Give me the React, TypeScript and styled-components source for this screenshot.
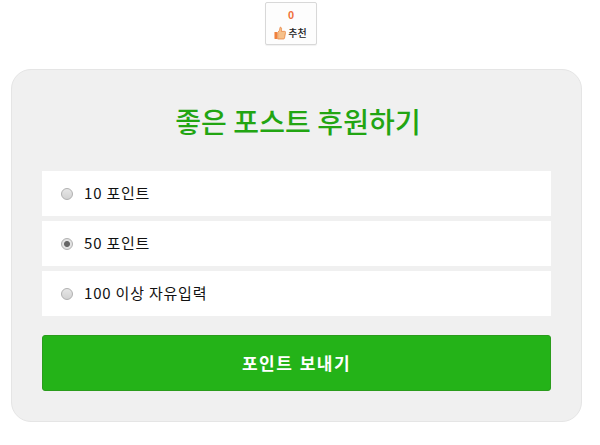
import React, { useState } from "react";
import styled, { createGlobalStyle } from "styled-components";

const GlobalStyle = createGlobalStyle`
    html, body {
        margin: 0;
        padding: 0;
        background: #fff;
        font-family: "Open Sans", "Noto Sans CJK KR", sans-serif;
    }
`;

const Page = styled.div`
    width: 600px;
    height: 445px;
    overflow: hidden;
    display: flex;
    flex-direction: column;
    align-items: flex-start;
    padding: 2px 0 0 11px;
    box-sizing: border-box;
`;

const LikeButton = styled.div`
    align-self: flex-start;
    margin-left: 254px;
    width: 52px;
    height: 43px;
    box-sizing: border-box;
    border: 1px solid #d8d8d8;
    border-radius: 2px;
    background: #fdfdfd;
    box-shadow: 0 1px 1px rgba(0, 0, 0, 0.06);
    display: flex;
    flex-direction: column;
    align-items: center;
    padding-top: 5px;
`;

const LikeCount = styled.div`
    font-family: "Liberation Sans", sans-serif;
    font-size: 11px;
    line-height: 14px;
    font-weight: 700;
    color: #f0703a;
`;

const LikeLabel = styled.div`
    display: flex;
    align-items: center;
    gap: 2px;
    margin: 3px 1px 0 0;
    font-family: "Noto Sans CJK KR", sans-serif;
    font-size: 10px;
    line-height: 16px;
    font-weight: 500;
    color: #222;
`;

const Card = styled.form`
    margin-top: 24px;
    width: 571px;
    height: 353px;
    box-sizing: border-box;
    padding: 0 30px;
    background: #f0f0f0;
    border: 1px solid #e5e5e5;
    border-radius: 20px;
`;

const Title = styled.h2`
    margin: 0;
    padding: 31px 0 0 3px;
    height: 101px;
    box-sizing: border-box;
    text-align: center;
    font-family: "Noto Sans CJK KR", sans-serif;
    font-size: 28px;
    line-height: 40px;
    font-weight: 500;
    letter-spacing: 0.1px;
    color: #22a512;
`;

const Options = styled.div`
    display: flex;
    flex-direction: column;
    gap: 5px;
`;

const Option = styled.label`
    height: 45px;
    padding: 0 0 2px 19px;
    box-sizing: border-box;
    display: flex;
    align-items: center;
    gap: 11px;
    background: #fff;
    font-family: "Noto Sans CJK KR", sans-serif;
    font-size: 15px;
    font-weight: 400;
    color: #111;
    letter-spacing: 0.8px;
`;

const Radio = styled.span<{ $checked: boolean }>`
    width: 12px;
    height: 12px;
    margin-top: 2px;
    box-sizing: border-box;
    border-radius: 50%;
    border: 1px solid #b0b0b0;
    background: ${props => props.$checked
        ? "radial-gradient(circle, #666 0 2.5px, #e2e2e2 3.5px)"
        : "linear-gradient(#e6e6e6, #d2d2d2)"};
`;

const Submit = styled.button`
    display: block;
    width: 100%;
    height: 56px;
    margin-top: 19px;
    padding-bottom: 2px;
    border: 1px solid #2a9c1c;
    border-radius: 3px;
    background: #24b318;
    color: #fff;
    font-family: "Noto Sans CJK KR", sans-serif;
    font-size: 17px;
    font-weight: 700;
    letter-spacing: 1.5px;
    word-spacing: 1px;
`;

const options = ["10 포인트", "50 포인트", "100 이상 자유입력"];

function ThumbIcon() {
    return (
        <svg width="12" height="14" viewBox="0 0 13 14">
            <rect x="0.5" y="6" width="3" height="7.5" rx="0.5" fill="#f0803c" />
            <path
                d="M4 6.5 L6 4 L6.6 0.8 C7.6 0.6 8.4 1.4 8.2 3 L8 5.2 L11.5 5.2 C12.6 5.2 12.8 6.2 12.4 7 L11.4 12.6 C11.2 13.3 10.8 13.5 10.2 13.5 L4 13.5 Z"
                fill="#f6c089"
                stroke="#e8803c"
                strokeWidth="0.8"
            />
        </svg>
    );
}

export default function App() {
    const [selected, setSelected] = useState(1);

    return (
        <Page>
            <GlobalStyle />
            <LikeButton>
                <LikeCount>0</LikeCount>
                <LikeLabel>
                    <ThumbIcon />
                    추천
                </LikeLabel>
            </LikeButton>
            <Card>
                <Title>좋은 포스트 후원하기</Title>
                <Options>
                    {options.map((text, index) => (
                        <Option key={text} onClick={() => setSelected(index)}>
                            <Radio $checked={selected === index} />
                            {text}
                        </Option>
                    ))}
                </Options>
                <Submit type="button">포인트 보내기</Submit>
            </Card>
        </Page>
    );
}
